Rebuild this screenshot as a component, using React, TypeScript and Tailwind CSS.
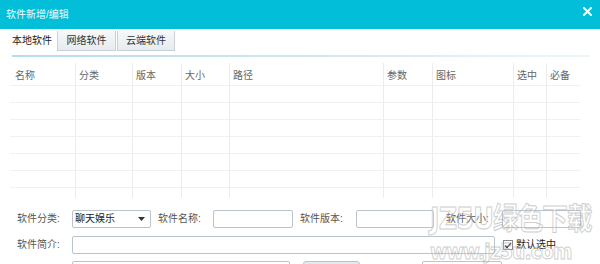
import React from "react";

const cols = [
  { w: 65, t: "名称" },
  { w: 57, t: "分类" },
  { w: 49, t: "版本" },
  { w: 48, t: "大小" },
  { w: 154, t: "路径" },
  { w: 49, t: "参数" },
  { w: 81, t: "图标" },
  { w: 33, t: "选中" },
  { w: 32, t: "必备" },
];

function Row({ h, header }: { h: number; header?: boolean }) {
  return (
    <div className="flex border-b border-[#eef0f2]" style={{ height: h }}>
      {cols.map((c, i) => (
        <div
          key={i}
          className={`flex items-center pl-[3px] text-[#666] ${i > 0 ? "border-l border-[#ececec]" : ""}`}
          style={{ width: c.w }}
        >
          {header ? (i === 0 ? <span className="pl-[2px] pt-[3px]">{c.t}</span> : <span className="pt-[3px]">{c.t}</span>) : null}
        </div>
      ))}
    </div>
  );
}

export default function App() {
  return (
    <div
      className="relative w-[600px] h-[264px] overflow-hidden bg-white text-[10px] leading-none"
      style={{ fontFamily: '"Liberation Sans", "Noto Sans CJK SC", sans-serif' }}
    >
      {/* Title bar */}
      <div className="h-[29px] bg-[#02bed9] flex items-center justify-between pl-[6px] pr-[8px] text-white">
        <span className="text-[10px] text-[#f0fbfd]">软件新增/编辑</span>
        <svg width="9" height="9" viewBox="0 0 9 9" className="mb-[6px]">
          <path d="M1 1 L8 8 M8 1 L1 8" stroke="white" strokeWidth="2" strokeLinecap="square" />
        </svg>
      </div>

      {/* Tabs */}
      <div className="flex pl-[6px] pt-[2px] h-[22px]">
        <div className="w-[52px] h-[20px] flex items-center pl-[6px] text-[#222] border-r border-[#c9d1d7] bg-white">
          本地软件
        </div>
        <div className="w-[58px] h-[20px] flex items-center justify-center text-[#333] border-r border-b border-[#c9d1d7] bg-gradient-to-b from-[#f6f8f9] to-[#e6ecef]">
          网络软件
        </div>
        <div className="ml-[1px] w-[58px] h-[20px] flex items-center justify-center text-[#333] border-x border-b border-[#c9d1d7] bg-gradient-to-b from-[#f6f8f9] to-[#e6ecef]">
          云端软件
        </div>
      </div>

      {/* blue line */}
      <div className="mx-[12px] mt-[4px] h-[2px] w-[578px] bg-gradient-to-r from-[#b6dcee] via-[#cfe7f2] to-[#eef6fa]" />

      {/* Table */}
      <div className="ml-[10px] mt-[6px] w-[570px]">
        <Row h={23} header />
        <Row h={17} />
        <Row h={17} />
        <Row h={17} />
        <Row h={17} />
        <Row h={17} />
        <Row h={17} />
        <div className="flex h-[10px]">
          {cols.map((c, i) => (
            <div key={i} className={i > 0 ? "border-l border-[#ececec]" : ""} style={{ width: c.w }} />
          ))}
        </div>
      </div>

      {/* Form */}
      <div className="mt-[12px] pl-[17px] text-[#555]">
        <div className="flex items-center h-[18px]">
          <span className="w-[55px]">软件分类:</span>
          <div className="w-[79px] h-[18px] border border-[#b9c4cd] rounded-[2px] flex items-center justify-between pl-[2px] pr-[5px] text-[#222]">
            <span>聊天娱乐</span>
            <svg width="7" height="4" viewBox="0 0 7 4">
              <path d="M0 0 L7 0 L3.5 4 Z" fill="#333" />
            </svg>
          </div>
          <span className="ml-[7px] w-[55px]">软件名称:</span>
          <div className="w-[80px] h-[18px] border border-[#b9c4cd] rounded-[2px]" />
          <span className="ml-[7px] w-[56px]">软件版本:</span>
          <div className="w-[78px] h-[18px] border border-[#b9c4cd] rounded-[2px]" />
          <span className="ml-[12px] w-[56px]">软件大小:</span>
          <div className="w-[79px] h-[18px] border border-[#b9c4cd] rounded-[2px]" />
        </div>
        <div className="flex items-center h-[18px] mt-[8px]">
          <span className="w-[55px]">软件简介:</span>
          <div className="w-[423px] h-[18px] border border-[#b9c4cd] rounded-[2px]" />
          <div className="ml-[8px] w-[10px] h-[10px] border border-[#888] bg-white flex items-center justify-center">
            <svg width="8" height="7" viewBox="0 0 8 7">
              <path d="M1 3.5 L3 5.5 L7 1" stroke="#222" strokeWidth="1.3" fill="none" />
            </svg>
          </div>
          <span className="ml-[3px] text-[#222]">默认选中</span>
        </div>
        <div className="flex h-[18px] mt-[7px]">
          <div className="ml-[55px] w-[218px] h-[18px] border border-[#b9c4cd] rounded-[2px]" />
          <div className="ml-[13px] w-[57px] h-[18px] border border-[#b9c4cd] rounded-[3px] bg-[#e4e9ed]" />
          <div className="ml-[62px] w-[80px] h-[18px] border border-[#b9c4cd] rounded-[2px]" />
        </div>
      </div>

      {/* Watermark */}
      <div className="absolute left-[430px] top-[204px] w-[200px] pointer-events-none select-none opacity-60 origin-left scale-x-[0.85]">
        <div
          className="whitespace-nowrap text-[30px] font-bold leading-none text-white/30 [-webkit-text-stroke:1px_#b0b0b0] tracking-[-1px]"
          style={{ fontFamily: '"DejaVu Sans", "Noto Sans CJK SC", sans-serif' }}
        >
          JZ5U绿色下载
        </div>
        <div
          className="whitespace-nowrap mt-[7px] text-[22px] font-bold leading-none text-white/30 [-webkit-text-stroke:1px_#b0b0b0] tracking-[-1px]"
          style={{ fontFamily: '"DejaVu Sans", sans-serif' }}
        >
          www.jz5u.com
        </div>
      </div>
    </div>
  );
}
